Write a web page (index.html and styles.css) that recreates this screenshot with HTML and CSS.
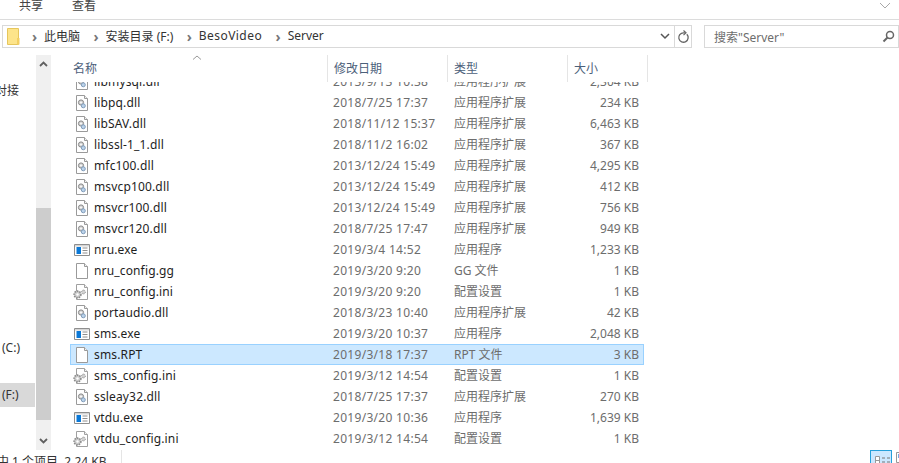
FILE: index.html
```html
<!DOCTYPE html>
<html lang="zh-CN">
<head>
<meta charset="utf-8">
<title>Server</title>
<link rel="stylesheet" href="styles.css">
</head>
<body>
<svg class="defs" width="0" height="0" aria-hidden="true">
  <symbol id="page" viewBox="0 0 16 16">
    <path d="M2.5.5h8l3 3v12h-11z" fill="#fff" stroke="#9a9a9a"/>
    <path d="M10.5.5v3h3" fill="#f2f2f2" stroke="#9a9a9a"/>
  </symbol>
  <symbol id="dll" viewBox="0 0 16 16">
    <path d="M2.5.5h8l3 3v12h-11z" fill="#fff" stroke="#9a9a9a"/>
    <path d="M10.5.5v3h3" fill="#f2f2f2" stroke="#9a9a9a"/>
    <circle cx="7" cy="7.5" r="2.6" fill="#d0d0d0" stroke="#8a8a8a"/>
    <circle cx="7" cy="7.5" r=".9" fill="#fff"/>
    <circle cx="9.3" cy="10.8" r="2" fill="#bcd3ea" stroke="#7f9cbb"/>
  </symbol>
  <symbol id="ini" viewBox="0 0 18 16">
    <path d="M4.5.5h8l3 3v12h-11z" fill="#fff" stroke="#a0a0a0"/>
    <path d="M12.5.5v3h3" fill="#f2f2f2" stroke="#a0a0a0"/>
    <circle cx="5.5" cy="10.5" r="3.4" fill="#c9c9c9" stroke="#8c8c8c" stroke-width="1.6" stroke-dasharray="1.5 1"/>
    <circle cx="5.5" cy="10.5" r="1.2" fill="#fff"/>
    <circle cx="11.5" cy="8" r="1.9" fill="#d2d2d2" stroke="#8c8c8c" stroke-dasharray="1 .8"/>
  </symbol>
  <symbol id="exe" viewBox="0 0 16 14">
    <path d="M.5 1.5h15v11H.5z" fill="#fff" stroke="#8e8e8e"/>
    <path d="M1 2h14v1.500H1z" fill="#d5d5d5"/>
    <path d="M2.500 4h4.500v7H2.500z" fill="#0a78d7"/>
    <path d="M8.500 5h5M8.500 7.500h5M8.500 10h5" stroke="#8e8e8e"/>
  </symbol>
</svg>

<div class="window">
  <header class="ribbon">
    <span class="tab">共享</span>
    <span class="tab">查看</span>
    <svg class="ribbon-caret" width="12" height="7" viewBox="0 0 12 7"><path d="M1 1l5 5 5-5" fill="none" stroke="#a8a8a8"/></svg>
  </header>

  <nav class="nav">
    <div class="address">
      <svg class="folder" width="13" height="17" viewBox="0 0 13 17">
        <path d="M.5.500h11v16h-11z" fill="#fde48a" stroke="#e6c65c"/>
        <path d="M10 10h2.500v6.500H10z" fill="#f3cf62"/>
      </svg>
      <span class="crumb-sep">›</span><span class="crumb">此电脑</span>
      <span class="crumb-sep">›</span><span class="crumb">安装目录 (F:)</span>
      <span class="crumb-sep">›</span><span class="crumb crumb-wide">BesoVideo</span>
      <span class="crumb-sep">›</span><span class="crumb">Server</span>
      <span class="address-caret">
        <svg width="10" height="7" viewBox="0 0 10 7"><path d="M1 1l4 4 4-4" fill="none" stroke="#555" stroke-width="1.500"/></svg>
      </span>
      <span class="refresh">
        <svg width="13" height="14" viewBox="0 0 13 14"><path d="M9.800 4.200a4.700 4.700 0 1 1-3.300-1.400H8" fill="none" stroke="#666" stroke-width="1.300"/><path d="M6.500.500l2.500 2.300-2.500 2.300" fill="none" stroke="#666" stroke-width="1.200"/></svg>
      </span>
    </div>
    <div class="search">
      <span>搜索"Server"</span>
      <svg width="13" height="13" viewBox="0 0 13 13"><circle cx="8" cy="5" r="3.500" fill="none" stroke="#666" stroke-width="1.500"/><path d="M5.500 7.500L1.500 11.500" stroke="#666" stroke-width="2"/></svg>
    </div>
  </nav>

  <main class="main">
    <aside class="sidebar">
      <div class="side-top">对接</div>
      <div class="side-c">(C:)</div>
      <div class="side-f">(F:)</div>
    </aside>

    <div class="scrollbar">
      <svg class="arrow" width="9" height="6" viewBox="0 0 9 6"><path d="M1 5l3.500-3.500L8 5" fill="none" stroke="#606060" stroke-width="1.800"/></svg>
      <div class="track"><div class="thumb"></div></div>
      <svg class="arrow" width="9" height="6" viewBox="0 0 9 6"><path d="M1 1l3.500 3.500L8 1" fill="none" stroke="#606060" stroke-width="1.800"/></svg>
    </div>

    <section class="files">
      <div class="head">
        <svg class="sort" width="10" height="5" viewBox="0 0 10 5"><path d="M1 4.500l4-3.500 4 3.500" fill="none" stroke="#9a9a9a"/></svg>
        <div class="hcell hname">名称</div>
        <div class="hcell hdate">修改日期</div>
        <div class="hcell htype">类型</div>
        <div class="hcell hsize">大小</div>
      </div>
      <div class="rows-view">
        <div class="rows">
          <div class="row"><svg class="ic ic-dll"><use href="#dll"/></svg><span class="name">libmysql.dll</span><span class="date">2013/9/13 10:38</span><span class="type">应用程序扩展</span><span class="size">2,304 KB</span></div>
          <div class="row"><svg class="ic ic-dll"><use href="#dll"/></svg><span class="name">libpq.dll</span><span class="date">2018/7/25 17:37</span><span class="type">应用程序扩展</span><span class="size">234 KB</span></div>
          <div class="row"><svg class="ic ic-dll"><use href="#dll"/></svg><span class="name">libSAV.dll</span><span class="date">2018/11/12 15:37</span><span class="type">应用程序扩展</span><span class="size">6,463 KB</span></div>
          <div class="row"><svg class="ic ic-dll"><use href="#dll"/></svg><span class="name">libssl-1_1.dll</span><span class="date">2018/11/2 16:02</span><span class="type">应用程序扩展</span><span class="size">367 KB</span></div>
          <div class="row"><svg class="ic ic-dll"><use href="#dll"/></svg><span class="name">mfc100.dll</span><span class="date">2013/12/24 15:49</span><span class="type">应用程序扩展</span><span class="size">4,295 KB</span></div>
          <div class="row"><svg class="ic ic-dll"><use href="#dll"/></svg><span class="name">msvcp100.dll</span><span class="date">2013/12/24 15:49</span><span class="type">应用程序扩展</span><span class="size">412 KB</span></div>
          <div class="row"><svg class="ic ic-dll"><use href="#dll"/></svg><span class="name">msvcr100.dll</span><span class="date">2013/12/24 15:49</span><span class="type">应用程序扩展</span><span class="size">756 KB</span></div>
          <div class="row"><svg class="ic ic-dll"><use href="#dll"/></svg><span class="name">msvcr120.dll</span><span class="date">2018/7/25 17:47</span><span class="type">应用程序扩展</span><span class="size">949 KB</span></div>
          <div class="row"><svg class="ic ic-exe"><use href="#exe"/></svg><span class="name">nru.exe</span><span class="date">2019/3/4 14:52</span><span class="type">应用程序</span><span class="size">1,233 KB</span></div>
          <div class="row"><svg class="ic ic-dll"><use href="#page"/></svg><span class="name">nru_config.gg</span><span class="date">2019/3/20 9:20</span><span class="type">GG 文件</span><span class="size">1 KB</span></div>
          <div class="row"><svg class="ic ic-ini"><use href="#ini"/></svg><span class="name">nru_config.ini</span><span class="date">2019/3/20 9:20</span><span class="type">配置设置</span><span class="size">1 KB</span></div>
          <div class="row"><svg class="ic ic-dll"><use href="#dll"/></svg><span class="name">portaudio.dll</span><span class="date">2018/3/23 10:40</span><span class="type">应用程序扩展</span><span class="size">42 KB</span></div>
          <div class="row"><svg class="ic ic-exe"><use href="#exe"/></svg><span class="name">sms.exe</span><span class="date">2019/3/20 10:37</span><span class="type">应用程序</span><span class="size">2,048 KB</span></div>
          <div class="row selected"><svg class="ic ic-dll"><use href="#page"/></svg><span class="name">sms.RPT</span><span class="date">2019/3/18 17:37</span><span class="type">RPT 文件</span><span class="size">3 KB</span></div>
          <div class="row"><svg class="ic ic-ini"><use href="#ini"/></svg><span class="name">sms_config.ini</span><span class="date">2019/3/12 14:54</span><span class="type">配置设置</span><span class="size">1 KB</span></div>
          <div class="row"><svg class="ic ic-dll"><use href="#dll"/></svg><span class="name">ssleay32.dll</span><span class="date">2018/7/25 17:37</span><span class="type">应用程序扩展</span><span class="size">270 KB</span></div>
          <div class="row"><svg class="ic ic-exe"><use href="#exe"/></svg><span class="name">vtdu.exe</span><span class="date">2019/3/20 10:36</span><span class="type">应用程序</span><span class="size">1,639 KB</span></div>
          <div class="row"><svg class="ic ic-ini"><use href="#ini"/></svg><span class="name">vtdu_config.ini</span><span class="date">2019/3/12 14:54</span><span class="type">配置设置</span><span class="size">1 KB</span></div>
        </div>
      </div>
    </section>
  </main>

  <footer class="status">
    <span class="status-text">中 1 个项目&nbsp;&nbsp;2.24 KB</span>
    <div class="views">
      <span class="view view-on">
        <svg width="17" height="12" viewBox="0 0 17 12"><path d="M1.500 1.500h4v10h-4zM1.500 5.500h4" fill="#fff" stroke="#999"/><path d="M8 3h3M13 3h3M8 7h3M13 7h3" stroke="#777"/></svg>
      </span>
      <span class="view">
        <svg width="8" height="12" viewBox="0 0 8 12"><path d="M.500 1.500h7v10h-7z" fill="#fff" stroke="#999"/><path d="M2 3h4v4H2z" fill="#7aa7e0"/></svg>
      </span>
    </div>
  </footer>
</div>
</body>
</html>
```

FILE: styles.css
```css
* { box-sizing: border-box; }

html, body {
  margin: 0;
  height: 100%;
  overflow: hidden;
  background: #fff;
}

body {
  font-family: "Noto Sans", "Noto Sans CJK SC", sans-serif;
  font-size: 12px;
  color: #1e1e1e;
}

.defs { display: block; height: 0; }

.window {
  display: flex;
  flex-direction: column;
  height: 463px;
  overflow: hidden;
}

/* ribbon */
.ribbon {
  flex: none;
  height: 20px;
  display: flex;
  align-items: flex-start;
  gap: 29px;
  padding-left: 19px;
  border-bottom: 1px solid #dcdcdc;
  position: relative;
}
.tab {
  line-height: 12px;
  color: #444;
}
.ribbon-caret {
  margin-left: auto;
  margin-right: 8px;
  margin-top: 2px;
}

/* address row */
.nav {
  flex: none;
  height: 22px;
  margin-top: 5px;
  display: flex;
  padding-left: 2px;
  gap: 12px;
  color: #333;
}
.address, .search {
  display: flex;
  align-items: center;
  border: 1px solid #d9d9d9;
  height: 23px;
}
.address {
  width: 690px;
  padding-left: 4px;
}
.folder { margin-right: 6px; }
.crumb-sep {
  width: 19px;
  text-align: center;
  font-size: 14px;
  line-height: 14px;
  color: #777;
  font-weight: 700;
  margin-left: -1px;
}
.crumb {
  margin-right: 7.5px;
  margin-bottom: 2px;
  color: #333;
}
.crumb-wide { letter-spacing: .45px; }
.address-caret {
  margin-left: auto;
  width: 19px;
  height: 21px;
  display: flex;
  align-items: center;
  justify-content: center;
}
.refresh {
  width: 17px;
  height: 21px;
  border-left: 1px solid #d9d9d9;
  display: flex;
  align-items: center;
  justify-content: center;
}
.search {
  flex: 1;
  padding: 0 3px 0 9px;
  justify-content: space-between;
  color: #6d6d6d;
}

/* main area */
.main {
  flex: 1;
  min-height: 0;
  margin-top: 8px;
  display: flex;
}
.sidebar {
  flex: none;
  width: 36px;
  display: flex;
  flex-direction: column;
  color: #333;
  overflow: hidden;
}
.side-top {
  margin-left: -5px;
  margin-top: 27px;
  line-height: 17px;
  white-space: nowrap;
}
.side-c {
  margin-top: 240px;
  padding-left: 2px;
  line-height: 17px;
}
.side-f {
  margin-top: 27px;
  width: 35px;
  height: 24px;
  line-height: 24px;
  padding-left: 2px;
  background: #d9d9d9;
}

.scrollbar {
  flex: none;
  width: 15px;
  background: #f0f0f0;
  display: flex;
  flex-direction: column;
  align-items: center;
}
.arrow {
  flex: none;
  margin: 6px 0;
}
.track {
  flex: 1;
  width: 100%;
  display: flex;
  flex-direction: column;
  justify-content: flex-end;
  padding-bottom: 12px;
}
.thumb {
  height: 212px;
  background: #cdcdcd;
}

/* files */
.files {
  flex: 1;
  min-width: 0;
  padding-left: 19px;
  display: flex;
  flex-direction: column;
}
.head {
  flex: none;
  height: 27px;
  display: flex;
  position: relative;
  color: #4c607a;
}
.sort {
  position: absolute;
  left: 122px;
  top: 0;
}
.hcell {
  height: 27px;
  line-height: 26px;
  padding-top: 1px;
  border-right: 1px solid #e5e5e5;
}
.hname { width: 258px; padding-left: 3px; }
.hdate { width: 120px; padding-left: 6px; }
.htype { width: 120px; padding-left: 6px; }
.hsize { width: 80px; padding-left: 6px; }

.rows-view {
  flex: 1;
  min-height: 0;
  overflow: hidden;
}
.rows {
  margin-top: -11px;
  width: 574px;
}
.row {
  height: 21px;
  display: grid;
  grid-template-columns: 23px 235px 120px 104px 1fr;
  align-items: center;
  line-height: 19px;
  border: 1px solid transparent;
  white-space: nowrap;
}
.row.selected {
  background: #cce8ff;
  border-color: #99d1ff;
}
.ic { justify-self: start; display: block; }
.ic-dll { width: 16px; height: 16px; margin-left: 3px; }
.ic-ini { width: 18px; height: 16px; margin-left: 1px; }
.ic-exe { width: 16px; height: 14px; margin-left: 3px; }
.name { color: #1e1e1e; letter-spacing: .15px; }
.date, .type, .size { color: #6d6d6d; }
.date { padding-left: 4px; letter-spacing: .3px; }
.type { padding-left: 5px; }
.size { text-align: right; padding-right: 4px; }

/* status */
.status {
  flex: none;
  height: 13px;
  display: flex;
  justify-content: space-between;
  color: #333;
}
.status-text {
  width: 125px;
  margin-left: -3px;
  line-height: 24px;
  white-space: nowrap;
  border-right: 1px solid #e5e5e5;
  overflow: hidden;
}
.views {
  display: flex;
  gap: 4px;
}
.view {
  display: block;
  width: 3px;
  height: 20px;
  overflow: hidden;
}
.view-on {
  width: 22px;
  background: #cce8ff;
  border: 1px solid #26a0da;
  padding: 3px 0 0 3px;
}
```
